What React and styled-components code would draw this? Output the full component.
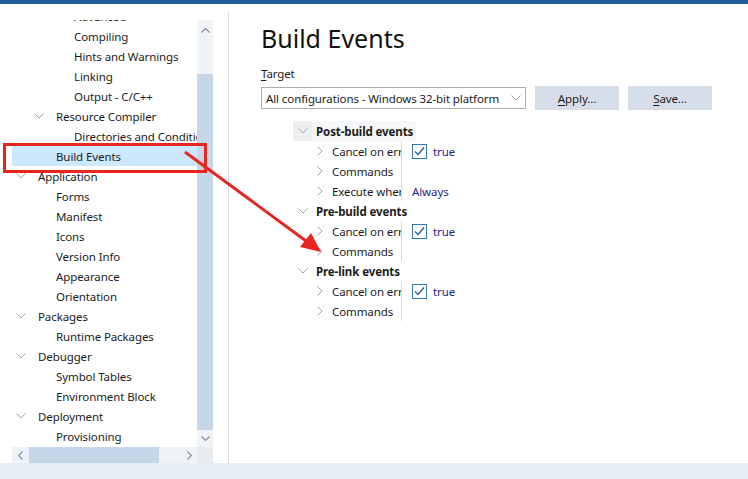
import React from 'react';
import styled, { createGlobalStyle } from 'styled-components';

const FONT = '"Noto Sans", "Open Sans", sans-serif';
const TEXT = '#1b1b1b';
const CHEVRON = '#a3a3a3';
const RED = '#e8261e';

const GlobalStyle = createGlobalStyle`
  html, body {
    margin: 0;
    padding: 0;
    background: #fff;
    overflow: hidden;
  }
  body {
    font-family: ${FONT};
    font-size: 11.5px;
    letter-spacing: -0.1px;
    color: ${TEXT};
  }
`;

const Page = styled.div`
  position: relative;
  width: 748px;
  height: 479px;
  display: flex;
  flex-direction: column;
`;

const TopBar = styled.div`
  height: 4px;
  background: #1f5c99;
`;

const Main = styled.div`
  flex: 1;
  display: flex;
  min-height: 0;
`;

const BottomStrip = styled.div`
  height: 16px;
  background: #e6edf5;
`;

/* ---------- left tree ---------- */

const LeftPanel = styled.div`
  width: 201px;
  padding: 16px 0 0 12px;
  display: grid;
  grid-template-columns: 185px 16px;
  grid-template-rows: 427px 16px;
`;

const TreeViewport = styled.div`
  overflow: hidden;
`;

const TreeList = styled.div`
  margin-top: -14px;
`;

const TreeRow = styled.div`
  height: 20px;
  display: flex;
  align-items: center;
  white-space: nowrap;
  padding-left: ${p => 4 + p.level * 18}px;
  background: ${p => (p.selected ? '#cce8ff' : 'transparent')};
`;

const ChevronSlot = styled.span`
  width: ${p => p.w || 22}px;
  flex: none;
  display: flex;
  align-items: center;
`;

const VScroll = styled.div`
  display: flex;
  flex-direction: column;
  background: #eef3f8;
`;

const HScroll = styled.div`
  display: flex;
  background: #eef3f8;
`;

const ScrollArrow = styled.div`
  flex: none;
  width: 16px;
  height: ${p => p.h || 16}px;
  display: flex;
  align-items: center;
  justify-content: center;
`;

const VThumbArea = styled.div`
  flex: 1;
  display: flex;
  flex-direction: column;
  padding-top: 33px;
`;

const VThumb = styled.div`
  flex: 1;
  background: #c4d6e7;
`;

const HThumb = styled.div`
  width: 130px;
  margin-left: 1px;
  background: #c4d6e7;
`;

const HTrack = styled.div`
  flex: 1;
`;

const Corner = styled.div`
  background: #e7ecf1;
`;

const Separator = styled.div`
  width: 1px;
  margin: 8px 0 0 15px;
  background: #dcdcdc;
`;

/* ---------- right pane ---------- */

const RightPane = styled.div`
  flex: 1;
  padding-left: 32px;
`;

const Heading = styled.h1`
  margin: 17px 0 0;
  font-size: 25px;
  line-height: 34px;
  font-weight: 400;
  letter-spacing: 0;
  color: #111;
`;

const FieldLabel = styled.div`
  margin-top: 10px;
  line-height: 18px;
  color: ${TEXT};
`;

const Accel = styled.span`
  text-decoration: underline;
  text-underline-offset: 2px;
`;

const TargetRow = styled.div`
  margin-top: 3px;
  display: flex;
  align-items: center;
  gap: 9px;
`;

const Combo = styled.div`
  width: 255px;
  height: 20px;
  border: 1px solid #adadad;
  display: flex;
  align-items: center;
  justify-content: space-between;
  padding: 0 4px;
  white-space: nowrap;
`;

const Button = styled.div`
  width: 84px;
  height: 24px;
  background: #d6dfe9;
  display: flex;
  align-items: center;
  justify-content: center;
  color: ${TEXT};
`;

const Grid = styled.div`
  margin: 11px 0 0 32px;
  width: 123px;
`;

const CatRow = styled.div`
  height: 20px;
  display: flex;
  align-items: center;
  font-weight: 700;
  white-space: nowrap;
  background: ${p => (p.focused ? '#f6f7f8' : 'transparent')};
`;

const CatChevron = styled.span`
  width: 19px;
  height: 20px;
  flex: none;
  display: flex;
  align-items: center;
  justify-content: center;
  margin-right: 4px;
  background: ${p => (p.focused ? '#eceef1' : 'transparent')};
`;

const PropRow = styled.div`
  height: 20px;
  display: flex;
  align-items: stretch;
  white-space: nowrap;
`;

const PropName = styled.div`
  width: 90px;
  margin-left: 19px;
  padding-left: 5px;
  border-right: 1px solid #d9d9d9;
  display: flex;
  align-items: center;
  overflow: hidden;
  flex: none;
  box-sizing: border-box;
`;

const PropValue = styled.div`
  padding-left: 10px;
  display: flex;
  align-items: center;
  gap: 6px;
  color: #23238e;
`;

const Overlay = styled.svg`
  position: absolute;
  left: 0;
  top: 0;
  pointer-events: none;
`;

/* ---------- icons ---------- */

const ChevronDown = ({ color = CHEVRON, w = 10 }) => (
  <svg width={w} height="6" viewBox="0 0 10 6">
    <path d="M0.5 0.5 L5 5 L9.5 0.5" fill="none" stroke={color} strokeWidth="1" />
  </svg>
);

const ChevronRight = () => (
  <svg width="6" height="10" viewBox="0 0 6 10">
    <path d="M0.5 0.5 L5 5 L0.5 9.5" fill="none" stroke={CHEVRON} strokeWidth="1" />
  </svg>
);

const ScrollChevron = ({ d, w, h }) => (
  <svg width={w} height={h} viewBox={`0 0 ${w} ${h}`}>
    <path d={d} fill="none" stroke="#8a8f96" strokeWidth="1.2" />
  </svg>
);

const CheckBox = () => (
  <svg width="15" height="15" viewBox="0 0 15 15">
    <rect x="0.5" y="0.5" width="14" height="14" fill="#fff" stroke="#3a78b5" />
    <path d="M3 7.5 L6 10.5 L12 3.5" fill="none" stroke="#2a5f9a" strokeWidth="1.4" />
  </svg>
);

/* ---------- data ---------- */

const TREE = [
  { label: 'Advanced', level: 2 },
  { label: 'Compiling', level: 2 },
  { label: 'Hints and Warnings', level: 2 },
  { label: 'Linking', level: 2 },
  { label: 'Output - C/C++', level: 2 },
  { label: 'Resource Compiler', level: 1, open: true },
  { label: 'Directories and Conditionals', level: 2 },
  { label: 'Build Events', level: 1, selected: true },
  { label: 'Application', level: 0, open: true },
  { label: 'Forms', level: 1 },
  { label: 'Manifest', level: 1 },
  { label: 'Icons', level: 1 },
  { label: 'Version Info', level: 1 },
  { label: 'Appearance', level: 1 },
  { label: 'Orientation', level: 1 },
  { label: 'Packages', level: 0, open: true },
  { label: 'Runtime Packages', level: 1 },
  { label: 'Debugger', level: 0, open: true },
  { label: 'Symbol Tables', level: 1 },
  { label: 'Environment Block', level: 1 },
  { label: 'Deployment', level: 0, open: true },
  { label: 'Provisioning', level: 1 },
];

const GROUPS = [
  {
    name: 'Post-build events',
    focused: true,
    props: [
      { name: 'Cancel on error', check: true, value: 'true' },
      { name: 'Commands' },
      { name: 'Execute when', value: 'Always' },
    ],
  },
  {
    name: 'Pre-build events',
    props: [
      { name: 'Cancel on error', check: true, value: 'true' },
      { name: 'Commands' },
    ],
  },
  {
    name: 'Pre-link events',
    props: [
      { name: 'Cancel on error', check: true, value: 'true' },
      { name: 'Commands' },
    ],
  },
];

export default function App() {
  return (
    <Page>
      <GlobalStyle />
      <TopBar />
      <Main>
        <LeftPanel>
          <TreeViewport>
            <TreeList>
              {TREE.map(item => (
                <TreeRow key={item.label} level={item.level} selected={item.selected}>
                  <ChevronSlot>{item.open && <ChevronDown />}</ChevronSlot>
                  {item.label}
                </TreeRow>
              ))}
            </TreeList>
          </TreeViewport>
          <VScroll>
            <ScrollArrow h={21}>
              <ScrollChevron w={9} h={5} d="M0.5 4.5 L4.5 0.5 L8.5 4.5" />
            </ScrollArrow>
            <VThumbArea>
              <VThumb />
            </VThumbArea>
            <ScrollArrow h={17}>
              <ScrollChevron w={9} h={5} d="M0.5 0.5 L4.5 4.5 L8.5 0.5" />
            </ScrollArrow>
          </VScroll>
          <HScroll>
            <ScrollArrow>
              <ScrollChevron w={5} h={9} d="M4.5 0.5 L0.5 4.5 L4.5 8.5" />
            </ScrollArrow>
            <HThumb />
            <HTrack />
            <ScrollArrow>
              <ScrollChevron w={5} h={9} d="M0.5 0.5 L4.5 4.5 L0.5 8.5" />
            </ScrollArrow>
          </HScroll>
          <Corner />
        </LeftPanel>
        <Separator />
        <RightPane>
          <Heading>Build Events</Heading>
          <FieldLabel>
            <Accel>T</Accel>arget
          </FieldLabel>
          <TargetRow>
            <Combo>
              All configurations - Windows 32-bit platform
              <ChevronDown />
            </Combo>
            <Button>
              <Accel>A</Accel>pply...
            </Button>
            <Button>
              <Accel>S</Accel>ave...
            </Button>
          </TargetRow>
          <Grid>
            {GROUPS.map(group => (
              <React.Fragment key={group.name}>
                <CatRow focused={group.focused}>
                  <CatChevron focused={group.focused}>
                    <ChevronDown />
                  </CatChevron>
                  {group.name}
                </CatRow>
                {group.props.map(prop => (
                  <PropRow key={prop.name}>
                    <PropName>
                      <ChevronSlot w={15}>
                        <ChevronRight />
                      </ChevronSlot>
                      {prop.name}
                    </PropName>
                    <PropValue>
                      {prop.check && <CheckBox />}
                      {prop.value}
                    </PropValue>
                  </PropRow>
                ))}
              </React.Fragment>
            ))}
          </Grid>
        </RightPane>
      </Main>
      <BottomStrip />
      <Overlay width="748" height="479" viewBox="0 0 748 479">
        <rect x="4.5" y="144.5" width="201" height="27" fill="none" stroke={RED} strokeWidth="3" />
        <line x1="185" y1="152" x2="306" y2="241" stroke={RED} strokeWidth="3" />
        <polygon points="321,252 300,247 311,233" fill={RED} />
      </Overlay>
    </Page>
  );
}
